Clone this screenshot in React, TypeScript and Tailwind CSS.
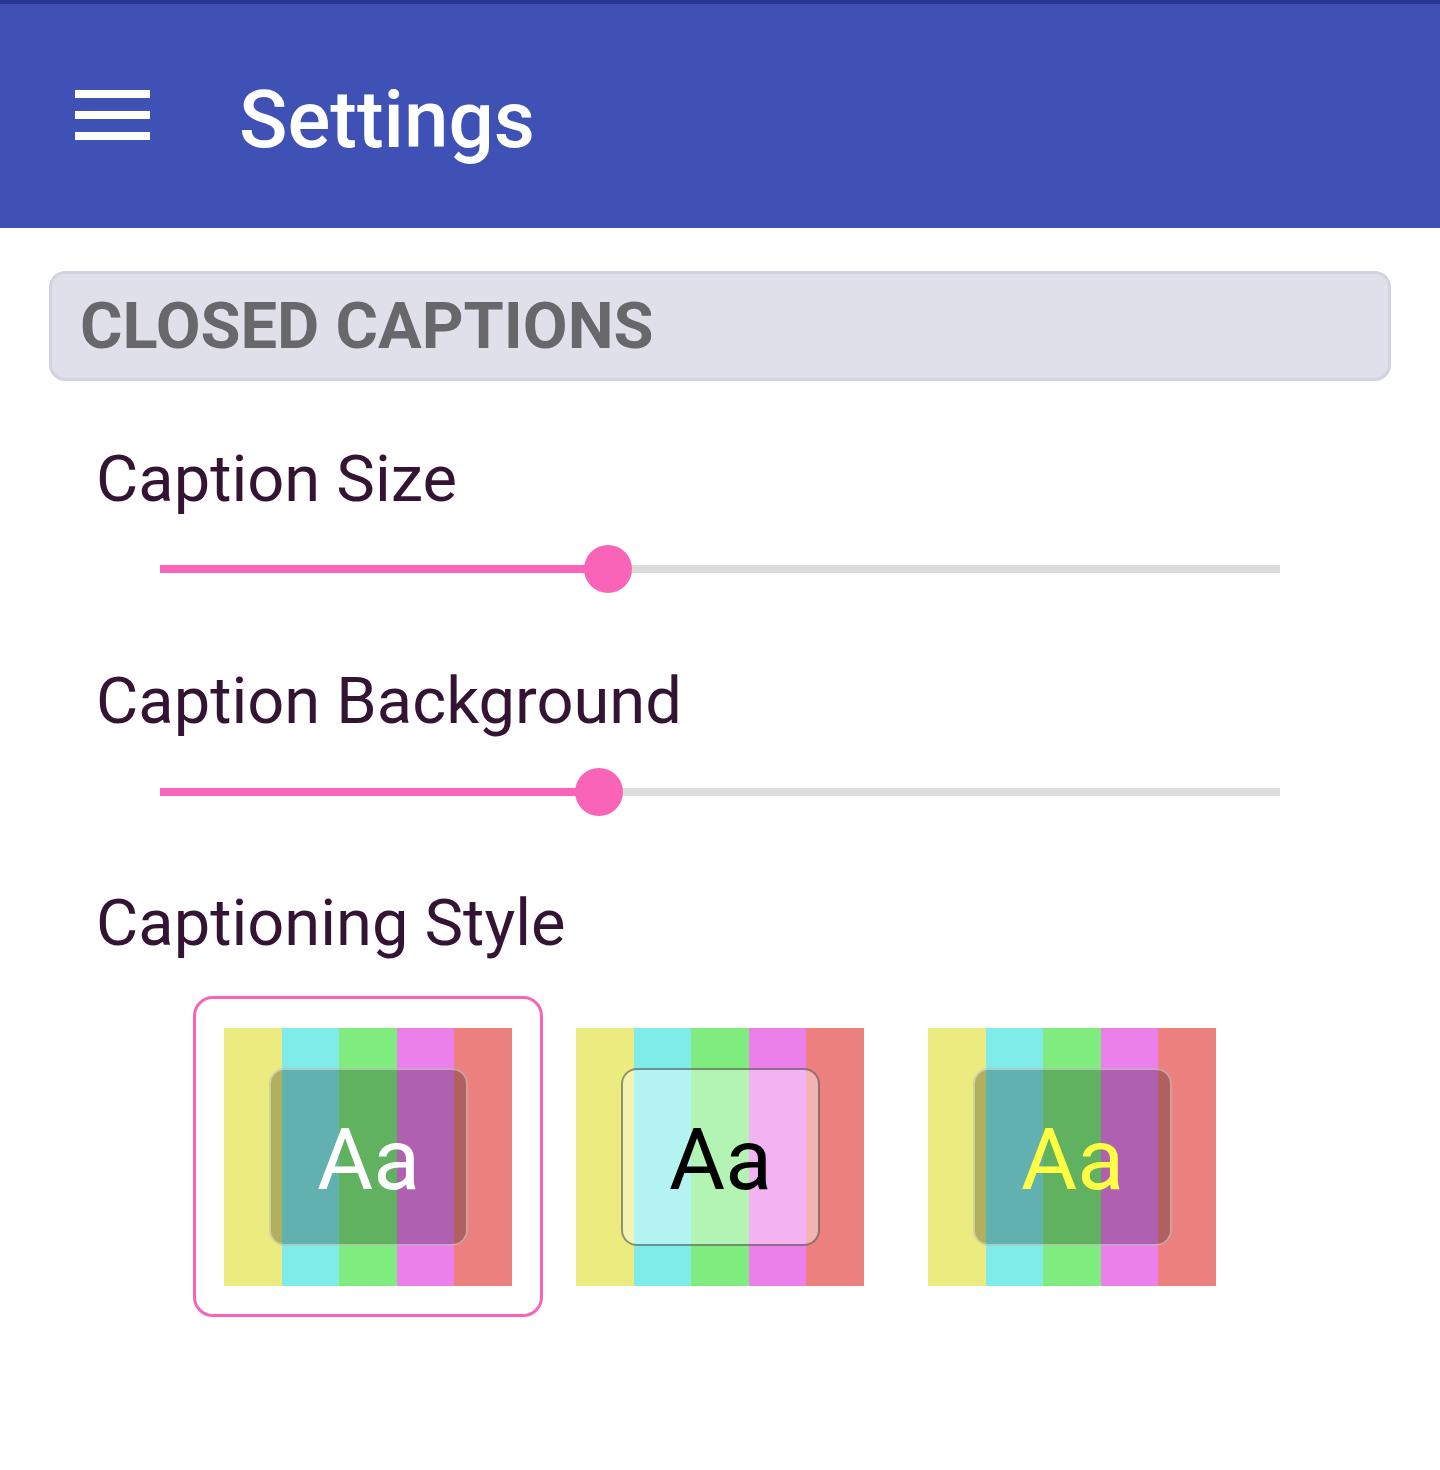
import { useState } from "react";

const font = { fontFamily: "Roboto, 'Noto Sans', sans-serif" };

const stripes = ["bg-[#ebeb7f]", "bg-[#80ecea]", "bg-[#80ec80]", "bg-[#eb80eb]", "bg-[#eb807f]"];

type CaptionStyle = {
  id: string;
  overlay: string;
  text: string;
};

const styles: CaptionStyle[] = [
  { id: "dark", overlay: "bg-black/25 border-white/40", text: "text-white" },
  { id: "light", overlay: "bg-white/40 border-black/40", text: "text-black" },
  { id: "yellow", overlay: "bg-black/25 border-white/40", text: "text-[#ffff44]" },
];

function Slider({ value }: { value: number }) {
  const pct = `${value * 100}%`;
  return (
    <div className="relative h-[48px] w-[1120px] ml-[160px] flex items-center">
      <div className="h-[8px] w-full bg-[#dcdcdc]" />
      <div className="absolute left-0 top-[20px] h-[8px] bg-[#f964b8]" style={{ width: pct }} />
      <div
        className="absolute top-0 h-[48px] w-[48px] -ml-[24px] rounded-full bg-[#f964b8]"
        style={{ left: pct }}
      />
    </div>
  );
}

function Label({ children }: { children: React.ReactNode }) {
  return (
    <div className="ml-[96px] text-[65px] leading-[80px] text-[#331433]" style={font}>
      {children}
    </div>
  );
}

export default function App() {
  const [selected, setSelected] = useState("dark");

  return (
    <div className="w-[1440px] h-[1470px] bg-white" style={font}>
      {/* App bar */}
      <header className="h-[228px] bg-[#3f51b5] border-t-4 border-[#283593] flex items-start">
        <div className="ml-[75px] mt-[86px] flex flex-col gap-[13px]">
          <div className="h-[8px] w-[75px] bg-white" />
          <div className="h-[8px] w-[75px] bg-white" />
          <div className="h-[8px] w-[75px] bg-white" />
        </div>
        <h1 className="ml-[89px] mt-[76px] text-[80px] leading-none font-medium text-white">Settings</h1>
      </header>

      {/* Section header */}
      <div className="mx-[49px] mt-[43px] h-[110px] rounded-[16px] border-[3px] border-[#d2d2e2] bg-[#e0e0eb] flex items-center pl-[28px]">
        <span className="text-[65px] leading-none font-bold text-[#68676c]">CLOSED CAPTIONS</span>
      </div>

      <div className="mt-[58px]">
        <Label>Caption Size</Label>
      </div>
      <div className="mt-[26px]">
        <Slider value={0.4} />
      </div>

      <div className="mt-[68px]">
        <Label>Caption Background</Label>
      </div>
      <div className="mt-[27px]">
        <Slider value={0.392} />
      </div>

      <div className="mt-[67px]">
        <Label>Captioning Style</Label>
      </div>

      <div className="mt-[33px] ml-[193px] flex gap-[2px]">
        {styles.map((s) => (
          <button
            key={s.id}
            onClick={() => setSelected(s.id)}
            className={
              "w-[350px] h-[321px] p-[28px] rounded-[20px] border-[3px] " +
              (selected === s.id ? "border-[#f964b8]" : "border-transparent")
            }
          >
            <div className="relative w-[288px] h-[258px] flex">
              {stripes.map((c) => (
                <div key={c} className={"flex-1 h-full " + c} />
              ))}
              <div
                className={
                  "absolute left-[45px] right-[44px] top-[40px] bottom-[40px] rounded-[16px] border-[2px] flex items-center justify-center " +
                  s.overlay
                }
              >
                <span className={"text-[86px] leading-none mt-[6px] " + s.text}>Aa</span>
              </div>
            </div>
          </button>
        ))}
      </div>
    </div>
  );
}
